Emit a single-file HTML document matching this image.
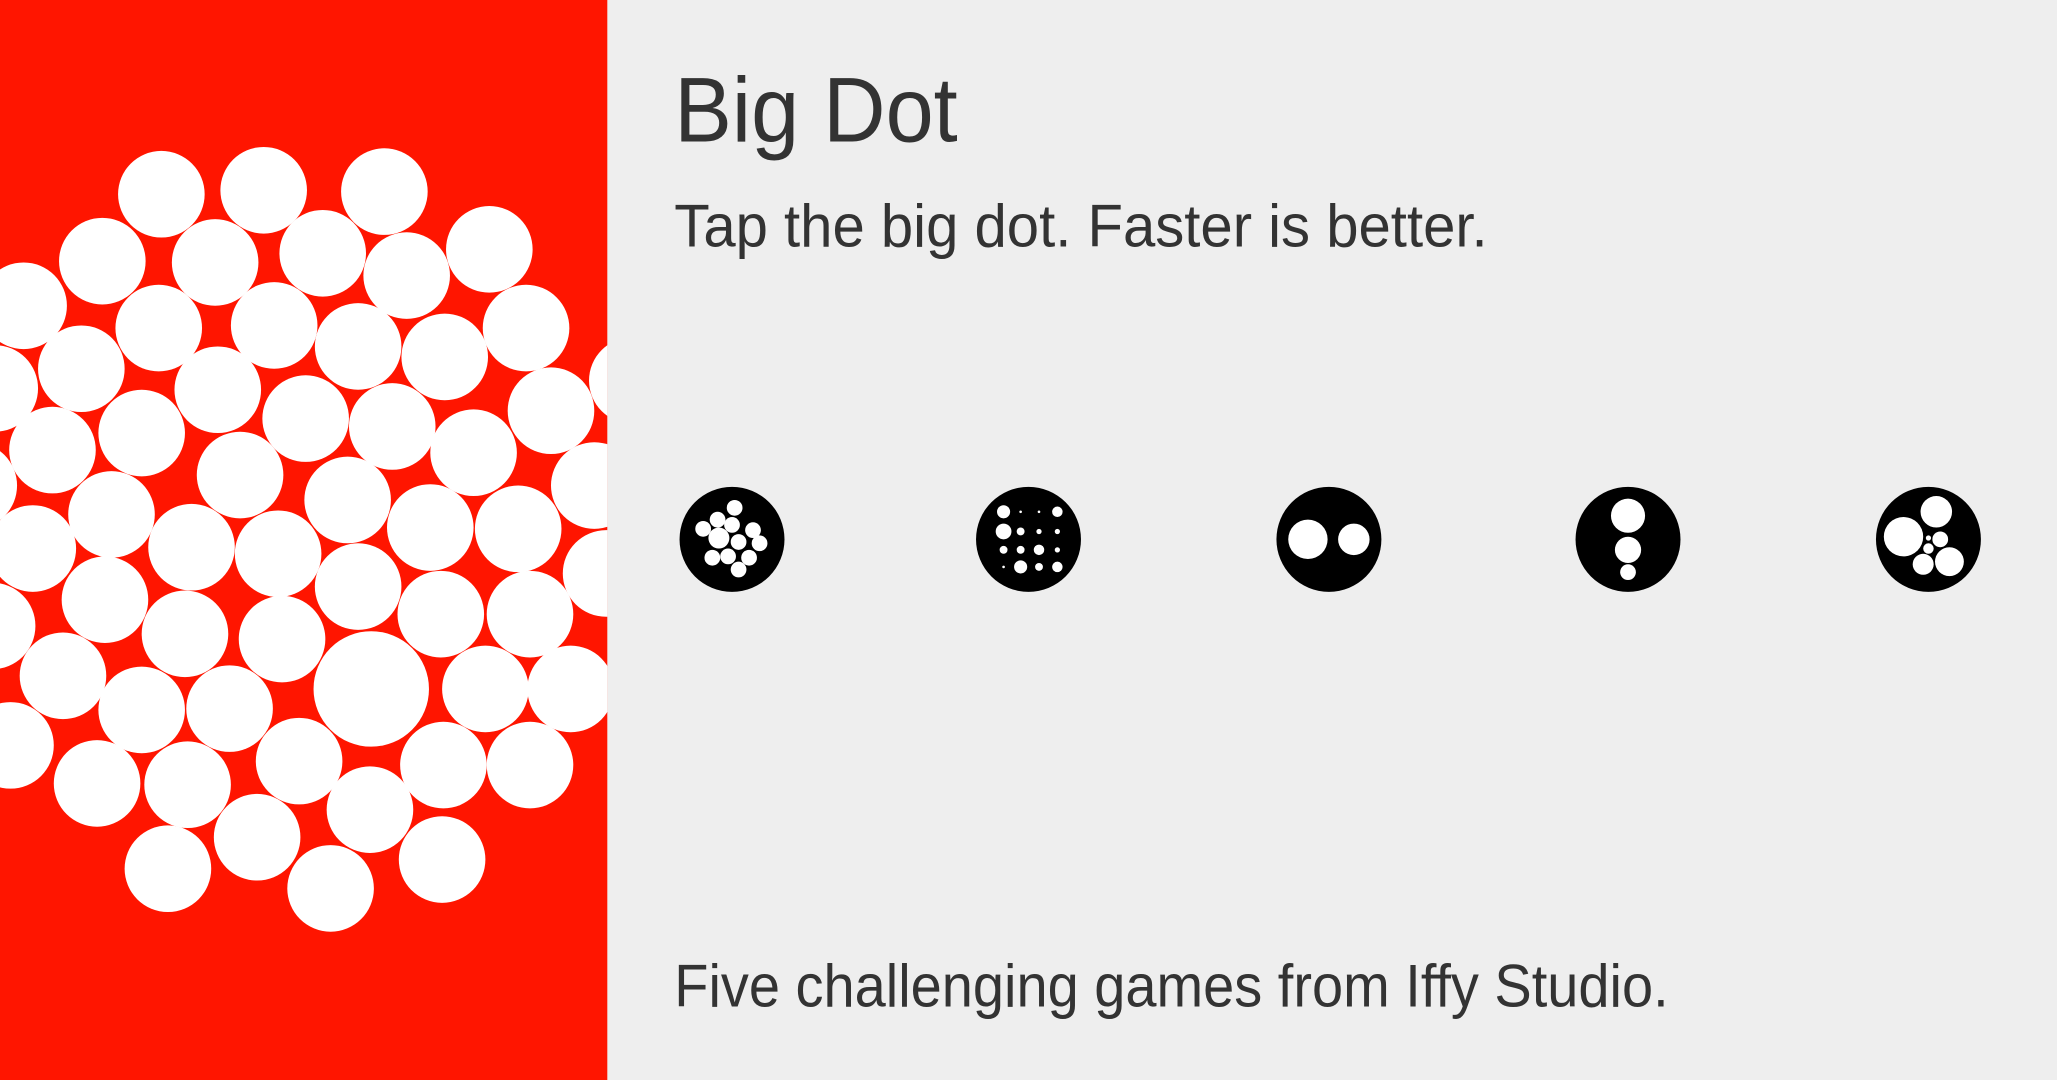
<!DOCTYPE html>
<html><head><meta charset="utf-8"><style>
html,body{margin:0;padding:0;width:2057px;height:1080px;overflow:hidden;background:#eee}
svg{display:block}
text{font-family:"Liberation Sans",sans-serif;font-weight:300;fill:#333}
</style></head><body>
<svg width="2057" height="1080" viewBox="0 0 1568 823" preserveAspectRatio="none" xmlns="http://www.w3.org/2000/svg">
<rect width="1568" height="823" fill="#eeeeee"/>
<svg x="0" y="0" width="463" height="823" overflow="hidden">
<rect width="463" height="823" fill="#ff1500"/>
<g fill="#fff">
<circle cx="123" cy="148" r="33"/><circle cx="201" cy="145" r="33"/><circle cx="293" cy="146" r="33"/>
<circle cx="78" cy="199" r="33"/><circle cx="164" cy="200" r="33"/><circle cx="246" cy="193" r="33"/><circle cx="310" cy="210" r="33"/><circle cx="373" cy="190" r="33"/>
<circle cx="18" cy="233" r="33"/><circle cx="121" cy="250" r="33"/><circle cx="209" cy="248" r="33"/><circle cx="273" cy="264" r="33"/><circle cx="339" cy="272" r="33"/><circle cx="401" cy="250" r="33"/>
<circle cx="-4" cy="296" r="33"/><circle cx="62" cy="281" r="33"/><circle cx="166" cy="297" r="33"/><circle cx="233" cy="319" r="33"/><circle cx="299" cy="325" r="33"/><circle cx="420" cy="313" r="33"/><circle cx="482" cy="290" r="33"/>
<circle cx="40" cy="343" r="33"/><circle cx="108" cy="330" r="33"/><circle cx="183" cy="362" r="33"/><circle cx="265" cy="381" r="33"/><circle cx="361" cy="345" r="33"/><circle cx="453" cy="370" r="33"/>
<circle cx="-20" cy="370" r="33"/><circle cx="85" cy="392" r="33"/><circle cx="146" cy="417" r="33"/><circle cx="212" cy="422" r="33"/><circle cx="328" cy="402" r="33"/><circle cx="395" cy="403" r="33"/><circle cx="462" cy="437" r="33"/>
<circle cx="25" cy="418" r="33"/><circle cx="80" cy="457" r="33"/><circle cx="141" cy="483" r="33"/><circle cx="273" cy="447" r="33"/><circle cx="336" cy="468" r="33"/><circle cx="404" cy="468" r="33"/>
<circle cx="-6" cy="477" r="33"/><circle cx="215" cy="487" r="33"/><circle cx="48" cy="515" r="33"/><circle cx="283" cy="525" r="44"/><circle cx="370" cy="525" r="33"/><circle cx="435" cy="525" r="33"/>
<circle cx="108" cy="541" r="33"/><circle cx="175" cy="540" r="33"/><circle cx="8" cy="568" r="33"/><circle cx="228" cy="580" r="33"/><circle cx="338" cy="583" r="33"/><circle cx="404" cy="583" r="33"/>
<circle cx="74" cy="597" r="33"/><circle cx="143" cy="598" r="33"/><circle cx="282" cy="617" r="33"/><circle cx="196" cy="638" r="33"/><circle cx="337" cy="655" r="33"/><circle cx="128" cy="662" r="33"/><circle cx="252" cy="677" r="33"/>
</g>
</svg>
<text x="514" y="108" font-size="70" textLength="216" lengthAdjust="spacingAndGlyphs">Big Dot</text>
<text x="514" y="188" font-size="46" textLength="620" lengthAdjust="spacingAndGlyphs">Tap the big dot. Faster is better.</text>
<text x="514" y="767" font-size="46" textLength="758" lengthAdjust="spacingAndGlyphs">Five challenging games from Iffy Studio.</text>
<g fill="#000">
<circle cx="558" cy="411" r="40"/><circle cx="784" cy="411" r="40"/><circle cx="1013" cy="411" r="40"/><circle cx="1241" cy="411" r="40"/><circle cx="1470" cy="411" r="40"/>
</g>
<g fill="#fff">
<circle cx="560" cy="387" r="6"/><circle cx="547" cy="396" r="6"/><circle cx="558" cy="400" r="6"/><circle cx="536" cy="403" r="6"/><circle cx="548" cy="410" r="8"/><circle cx="563" cy="413" r="6"/><circle cx="574" cy="404" r="6"/><circle cx="579" cy="414" r="6"/><circle cx="543" cy="425" r="6"/><circle cx="555" cy="424" r="6"/><circle cx="571" cy="425" r="6"/><circle cx="563" cy="434" r="6"/>
<circle cx="765" cy="390" r="5"/><circle cx="765" cy="405" r="6"/><circle cx="778" cy="405" r="3"/><circle cx="792" cy="405" r="2"/><circle cx="806" cy="405" r="2"/><circle cx="765" cy="419" r="3"/><circle cx="778" cy="419" r="3"/><circle cx="792" cy="419" r="4"/><circle cx="806" cy="419" r="2"/><circle cx="778" cy="432" r="5"/><circle cx="792" cy="432" r="3"/><circle cx="806" cy="432" r="4"/><circle cx="778" cy="390" r="1"/><circle cx="792" cy="390" r="1"/><circle cx="806" cy="390" r="4"/><circle cx="765" cy="432" r="1"/>
<circle cx="997" cy="411" r="15"/><circle cx="1032" cy="411" r="12"/>
<circle cx="1241" cy="393" r="13"/><circle cx="1241" cy="419" r="10"/><circle cx="1241" cy="436" r="6"/>
<circle cx="1451" cy="409" r="15"/><circle cx="1476" cy="390" r="12"/><circle cx="1479" cy="411" r="6"/><circle cx="1486" cy="428" r="11"/><circle cx="1466" cy="430" r="8"/><circle cx="1470" cy="410" r="2"/><circle cx="1470" cy="418" r="4"/>
</g>
</svg>
</body></html>
